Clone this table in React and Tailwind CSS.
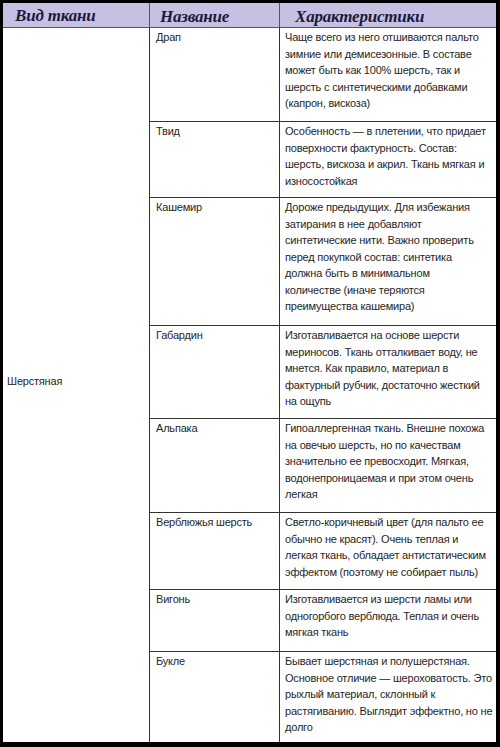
import React from 'react';

const ROWS = [
  {
    name: 'Драп',
    h: 'h-[94px]',
    lines: [
      'Чаще всего из него отшиваются пальто',
      'зимние или демисезонные. В составе',
      'может быть как 100% шерсть, так и',
      'шерсть с синтетическими добавками',
      '(капрон, вискоза)',
    ],
  },
  {
    name: 'Твид',
    h: 'h-[76px]',
    lines: [
      'Особенность — в плетении, что придает',
      'поверхности фактурность. Состав:',
      'шерсть, вискоза и акрил. Ткань мягкая и',
      'износостойкая',
    ],
  },
  {
    name: 'Кашемир',
    h: 'h-[128px]',
    lines: [
      'Дороже предыдущих. Для избежания',
      'затирания в нее добавляют',
      'синтетические нити. Важно проверить',
      'перед покупкой состав: синтетика',
      'должна быть в минимальном',
      'количестве (иначе теряются',
      'преимущества кашемира)',
    ],
  },
  {
    name: 'Габардин',
    h: 'h-[93px]',
    lines: [
      'Изготавливается на основе шерсти',
      'мериносов. Ткань отталкивает воду, не',
      'мнется. Как правило, материал в',
      'фактурный рубчик, достаточно жесткий',
      'на ощупь',
    ],
  },
  {
    name: 'Альпака',
    h: 'h-[94px]',
    lines: [
      'Гипоаллергенная ткань. Внешне похожа',
      'на овечью шерсть, но по качествам',
      'значительно ее превосходит. Мягкая,',
      'водонепроницаемая и при этом очень',
      'легкая',
    ],
  },
  {
    name: 'Верблюжья шерсть',
    h: 'h-[77px]',
    lines: [
      'Светло-коричневый цвет (для пальто ее',
      'обычно не красят). Очень теплая и',
      'легкая ткань, обладает антистатическим',
      'эффектом (поэтому не собирает пыль)',
    ],
  },
  {
    name: 'Вигонь',
    h: 'h-[62px]',
    lines: [
      'Изготавливается из шерсти ламы или',
      'одногорбого верблюда. Теплая и очень',
      'мягкая ткань',
    ],
  },
  {
    name: 'Букле',
    h: 'h-[90px]',
    last: true,
    lines: [
      'Бывает шерстяная и полушерстяная.',
      'Основное отличие — шероховатость. Это',
      'рыхлый материал, склонный к',
      'растягиванию. Выглядит эффектно, но не',
      'долго',
    ],
  },
];

const HEAD = "font-['Liberation_Serif',serif] italic font-bold text-[17px] leading-[22px] text-[#1c1a3a]";

export default function App() {
  return (
    <div className="w-[500px] h-[747px] bg-white border-t-[3px] border-l-[3px] border-r-[4px] border-b-[5px] border-black flex flex-col font-['Liberation_Sans',Arial,sans-serif] text-[11px] leading-[16.5px] tracking-[-0.2px] text-[#262626]">
      {/* Header */}
      <div className="flex shrink-0 h-[25px] bg-[#c6c0e3] border-b border-[#555]">
        <div className={`w-[146px] shrink-0 pl-[12px] pt-[2px] ${HEAD}`}>Вид ткани</div>
        <div className="w-px shrink-0 bg-[#555]" />
        <div className={`w-[129px] shrink-0 pl-[10px] pt-[3px] ${HEAD}`}>Название</div>
        <div className="w-px shrink-0 bg-[#555]" />
        <div className={`flex-1 min-w-0 pl-[15px] pt-[3px] ${HEAD}`}>Характеристики</div>
      </div>

      {/* Body */}
      <div className="flex flex-1 min-h-0">
        <div className="w-[146px] shrink-0 flex items-center pl-[4px] pb-[8px]">Шерстяная</div>
        <div className="w-px shrink-0 bg-[#333]" />
        <div className="flex-1 min-w-0 flex flex-col">
          {ROWS.map((r) => (
            <div key={r.name} className={`flex shrink-0 ${r.h} ${r.last ? '' : 'border-b border-[#333]'}`}>
              <div className="w-[129px] shrink-0 pl-[6px] pt-[1px] whitespace-nowrap">{r.name}</div>
              <div className="w-px shrink-0 bg-[#333]" />
              <div className="flex-1 min-w-0 overflow-hidden pl-[5px] pt-[1px] whitespace-nowrap">
                {r.lines.map((l, i) => (
                  <div key={i}>{l}</div>
                ))}
              </div>
            </div>
          ))}
        </div>
      </div>
    </div>
  );
}
